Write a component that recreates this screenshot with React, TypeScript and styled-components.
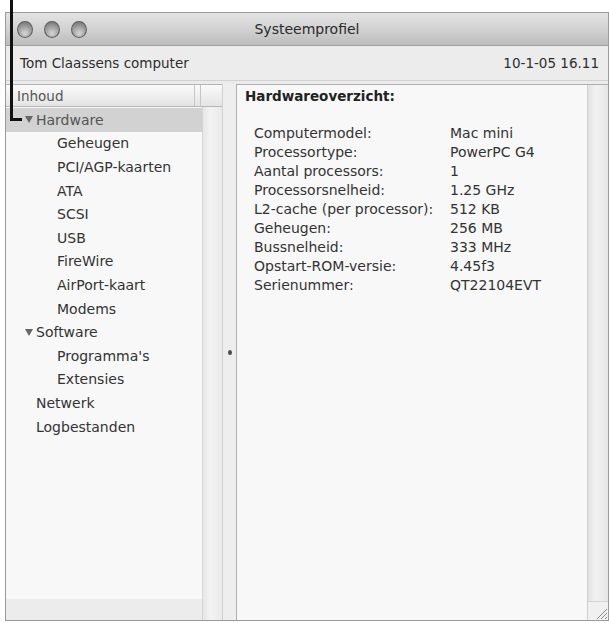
import React from "react";
import styled, { createGlobalStyle } from "styled-components";

const GlobalStyle = createGlobalStyle`
  html, body {
    margin: 0;
    padding: 0;
    background: #ffffff;
  }
  body {
    font-family: "DejaVu Sans", "Liberation Sans", sans-serif;
    color: #3a3a3a;
  }
`;

const Page = styled.div`
  position: relative;
  width: 609px;
  height: 623px;
  padding: 12px 0 0 5px;
  box-sizing: border-box;
`;

const Callout = styled.div`
  position: absolute;
  left: 10px;
  top: 0;
  width: 12px;
  height: 121px;
  border-left: 3px solid #111;
  border-bottom: 3px solid #111;
  box-sizing: border-box;
`;

const Window = styled.div`
  width: 604px;
  height: 609px;
  border: 1px solid #9a9a9a;
  box-sizing: border-box;
  display: flex;
  flex-direction: column;
  background: #ebebeb;
`;

const TitleBar = styled.div`
  height: 32px;
  flex: none;
  display: grid;
  grid-template-columns: 1fr auto 1fr;
  align-items: center;
  padding-left: 11px;
  background: linear-gradient(#e4e4e4, #d0d0d0 55%, #bcbcbc);
  border-bottom: 1px solid #9c9c9c;
`;

const Lights = styled.div`
  display: flex;
  gap: 11px;
`;

const Light = styled.span`
  width: 16px;
  height: 17px;
  border-radius: 50%;
  box-sizing: border-box;
  border: 1px solid #5e5e5e;
  background: radial-gradient(circle at 50% 75%, #d8d8d8 0%, #a4a4a4 45%, #6a6a6a 100%);
`;

const Title = styled.div`
  font-size: 14px;
  color: #2a2a2a;
  padding-right: 11px;
`;

const Toolbar = styled.div`
  height: 35px;
  flex: none;
  display: flex;
  align-items: center;
  justify-content: space-between;
  padding: 0 9px 0 14px;
  font-size: 13.5px;
  color: #2e2e2e;
  background: #ececec;
  border-bottom: 1px solid #d2d2d2;
  box-sizing: border-box;
`;

const Body = styled.div`
  flex: 1;
  display: flex;
  padding-top: 3px;
  min-height: 0;
`;

const Sidebar = styled.div`
  width: 216px;
  flex: none;
  display: grid;
  grid-template-columns: 1fr 20px;
  grid-template-rows: 22px 1fr 21px;
  border-top: 1px solid #b4b4b4;
`;

const Header = styled.div`
  grid-column: 1 / 3;
  display: flex;
  background: linear-gradient(#fafafa, #e4e4e4);
  border-bottom: 1px solid #b8b8b8;
  font-size: 13.5px;
  color: #555;
`;

const HeaderCell = styled.div<{ $w?: number }>`
  ${(p) => (p.$w ? `width: ${p.$w}px; flex: none;` : "flex: 1;")}
  display: flex;
  align-items: center;
  padding-left: ${(p) => (p.$w ? 0 : 11)}px;
  border-right: 1px solid #c6c6c6;
  &:last-child {
    border-right: none;
  }
`;

const List = styled.ul`
  list-style: none;
  margin: 0;
  padding: 1px 0 0;
  background: #f8f8f8;
  box-shadow: 2px 2px 3px rgba(0, 0, 0, 0.16);
  font-size: 14px;
`;

const Item = styled.li<{ $level: number; $selected?: boolean }>`
  height: 23.6px;
  display: flex;
  align-items: center;
  padding-left: ${(p) => (p.$level === 2 ? 51 : 19)}px;
  background: ${(p) => (p.$selected ? "#d2d2d2" : "transparent")};
  color: ${(p) => (p.$selected ? "#555" : "#333")};
`;

const Toggle = styled.span`
  width: 11px;
  display: inline-flex;
  align-items: center;
`;

const VScroll = styled.div`
  grid-column: 2;
  grid-row: 2 / 4;
  background: linear-gradient(90deg, #e6e6e6, #f3f3f3 40%, #eaeaea);
  border-left: 1px solid #d6d6d6;
`;

const HStrip = styled.div`
  grid-column: 1;
  grid-row: 3;
  background: #ececec;
`;

const Splitter = styled.div`
  width: 14px;
  flex: none;
  display: flex;
  align-items: center;
  justify-content: center;
  background: #eeeeee;
  border-left: 1px solid #d0d0d0;
  box-sizing: border-box;
`;

const Dot = styled.span`
  width: 4px;
  height: 5px;
  border-radius: 50%;
  background: #4a4a4a;
`;

const Detail = styled.div`
  flex: 1;
  display: flex;
  border-top: 1px solid #b0b0b0;
  border-left: 1px solid #b0b0b0;
  background: #f8f8f8;
`;

const DetailContent = styled.div`
  flex: 1;
  padding: 2px 0 0 8px;
`;

const Heading = styled.div`
  font-size: 13.5px;
  font-weight: bold;
  line-height: 18px;
  color: #222;
`;

const Specs = styled.dl`
  display: grid;
  grid-template-columns: 196px 1fr;
  grid-auto-rows: 19px;
  align-items: center;
  margin: 18px 0 0 9px;
  font-size: 14px;
  color: #333;
  & > dt,
  & > dd {
    margin: 0;
  }
`;

const DScroll = styled.div`
  width: 20px;
  flex: none;
  display: flex;
  flex-direction: column;
  justify-content: flex-end;
  background: linear-gradient(90deg, #e2e2e2, #f2f2f2 40%, #e6e6e6);
  border-left: 1px solid #cfcfcf;
`;

const Grip = styled.div`
  height: 18px;
  display: flex;
  align-items: flex-end;
  justify-content: flex-end;
  border-top: 1px solid #d4d4d4;
  background: #f0f0f0;
`;

const triangle = (
  <svg width="8" height="7" viewBox="0 0 8 7">
    <path d="M0 0 H8 L4 7 Z" fill="#666" />
  </svg>
);

const gripLines = (
  <svg width="14" height="14" viewBox="0 0 14 14">
    <path d="M13 3 L3 13 M13 7 L7 13 M13 11 L11 13" stroke="#8a8a8a" strokeWidth="1" />
  </svg>
);

const tree: { label: string; level: number; open?: boolean; selected?: boolean }[] = [
  { label: "Hardware", level: 0, open: true, selected: true },
  { label: "Geheugen", level: 2 },
  { label: "PCI/AGP-kaarten", level: 2 },
  { label: "ATA", level: 2 },
  { label: "SCSI", level: 2 },
  { label: "USB", level: 2 },
  { label: "FireWire", level: 2 },
  { label: "AirPort-kaart", level: 2 },
  { label: "Modems", level: 2 },
  { label: "Software", level: 0, open: true },
  { label: "Programma's", level: 2 },
  { label: "Extensies", level: 2 },
  { label: "Netwerk", level: 1 },
  { label: "Logbestanden", level: 1 },
];

const specs: [string, string][] = [
  ["Computermodel:", "Mac mini"],
  ["Processortype:", "PowerPC G4"],
  ["Aantal processors:", "1"],
  ["Processorsnelheid:", "1.25 GHz"],
  ["L2-cache (per processor):", "512 KB"],
  ["Geheugen:", "256 MB"],
  ["Bussnelheid:", "333 MHz"],
  ["Opstart-ROM-versie:", "4.45f3"],
  ["Serienummer:", "QT22104EVT"],
];

export default function App() {
  return (
    <Page>
      <GlobalStyle />
      <Window>
        <TitleBar>
          <Lights>
            <Light />
            <Light />
            <Light />
          </Lights>
          <Title>Systeemprofiel</Title>
          <span />
        </TitleBar>
        <Toolbar>
          <span>Tom Claassens computer</span>
          <span>10-1-05 16.11</span>
        </Toolbar>
        <Body>
          <Sidebar>
            <Header>
              <HeaderCell>Inhoud</HeaderCell>
              <HeaderCell $w={5} />
              <HeaderCell $w={21} />
            </Header>
            <List>
              {tree.map((t) => (
                <Item key={t.label} $level={t.level} $selected={t.selected}>
                  {t.level < 2 && <Toggle>{t.open ? triangle : null}</Toggle>}
                  {t.label}
                </Item>
              ))}
            </List>
            <VScroll />
            <HStrip />
          </Sidebar>
          <Splitter>
            <Dot />
          </Splitter>
          <Detail>
            <DetailContent>
              <Heading>Hardwareoverzicht:</Heading>
              <Specs>
                {specs.map(([k, v]) => (
                  <React.Fragment key={k}>
                    <dt>{k}</dt>
                    <dd>{v}</dd>
                  </React.Fragment>
                ))}
              </Specs>
            </DetailContent>
            <DScroll>
              <Grip>{gripLines}</Grip>
            </DScroll>
          </Detail>
        </Body>
      </Window>
      <Callout />
    </Page>
  );
}
